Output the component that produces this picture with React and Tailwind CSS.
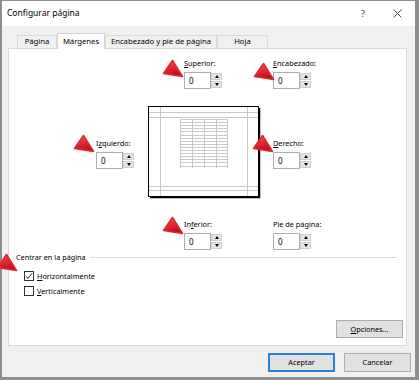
import React from 'react';

const Arrow = ({ className }) => (
    <svg className={`absolute ${className}`} width="22" height="20" viewBox="0 0 22 20">
        <defs>
            <linearGradient id="redcone" x1="0" y1="0" x2="0.3" y2="1">
                <stop offset="0" stopColor="#f65a5e" />
                <stop offset="0.55" stopColor="#e3282f" />
                <stop offset="1" stopColor="#b9121b" />
            </linearGradient>
        </defs>
        <path d="M10.5 1.5 L20.5 17.5 L1.5 14.5 Z" fill="url(#redcone)" stroke="#dc2a31" strokeWidth="1.6" strokeLinejoin="round" />
    </svg>
);

const Spin = ({ value = '0' }) => (
    <div className="flex h-[17px]">
        <div className="w-[27px] border border-[#acaeb3] bg-white pl-[4px] text-[8px] leading-[15px] text-black">{value}</div>
        <div className="flex w-[11px] flex-col gap-[1px] py-[1px]">
            <div className="flex flex-1 items-center justify-center border border-[#cfcfcf] bg-[#e5e5e5]">
                <div className="h-0 w-0 border-x-[2.5px] border-b-[3px] border-x-transparent border-b-black" />
            </div>
            <div className="flex flex-1 items-center justify-center border border-[#cfcfcf] bg-[#e5e5e5]">
                <div className="h-0 w-0 border-x-[2.5px] border-t-[3px] border-x-transparent border-t-black" />
            </div>
        </div>
    </div>
);

const Field = ({ label }) => (
    <div className="flex flex-col">
        <div className="whitespace-nowrap text-[7.3px] leading-[12px] text-black">{label}</div>
        <div className="mt-[3px]">
            <Spin />
        </div>
    </div>
);

const Preview = () => {
    const rows = [];
    for (let y = 13; y <= 62; y += 3.1) rows.push(y);
    return (
        <svg width="113" height="93" viewBox="0 0 113 93" className="shrink-0">
            <g stroke="#c9c9c9" strokeWidth="1" fill="none">
                <line x1="1" y1="6.5" x2="110" y2="6.5" />
                <line x1="1" y1="11.5" x2="110" y2="11.5" />
                <line x1="1" y1="80.5" x2="110" y2="80.5" />
                <line x1="1" y1="84.5" x2="110" y2="84.5" />
                <line x1="12.5" y1="1" x2="12.5" y2="90" />
                <line x1="99.5" y1="1" x2="99.5" y2="90" />
                {rows.map((y) => (
                    <line key={y} x1="32" y1={Math.round(y) + 0.5} x2="80" y2={Math.round(y) + 0.5} />
                ))}
                {[32.5, 44.5, 56.5, 68.5, 79.5].map((x) => (
                    <line key={x} x1={x} y1="13" x2={x} y2="62" />
                ))}
            </g>
            <rect x="0.5" y="0.5" width="110" height="90" fill="none" stroke="#000" strokeWidth="1" />
            <line x1="111.5" y1="2" x2="111.5" y2="92" stroke="#000" strokeWidth="1.5" />
            <line x1="2" y1="91.5" x2="112" y2="91.5" stroke="#000" strokeWidth="1.5" />
        </svg>
    );
};

const Check = ({ checked, children }) => (
    <div className="flex h-[12px] items-center">
        <div className="ml-[15px] flex h-[10px] w-[10px] items-center justify-center border border-[#333] bg-white">
            {checked && (
                <svg width="8" height="8" viewBox="0 0 8 8">
                    <path d="M1 4.2 L3 6.3 L7 1.3" fill="none" stroke="#222" strokeWidth="1" />
                </svg>
            )}
        </div>
        <span className="ml-[3px] text-[7.3px] leading-[12px] text-black">{children}</span>
    </div>
);

const Tab = ({ children, className = '', active }) =>
    active ? (
        <div className={`relative z-10 -mb-px flex h-[16px] items-center justify-center border border-b-0 border-[#d4d4d4] bg-white text-[7.7px] ${className}`}>
            {children}
        </div>
    ) : (
        <div className={`mt-[2px] flex h-[13px] items-center justify-center border border-b-0 border-[#dadada] bg-[#f0f0f0] text-[7.7px] ${className}`}>
            {children}
        </div>
    );

export default function App() {
    return (
        <div className="relative h-[380px] w-[419px] overflow-hidden bg-white font-['Noto_Sans',sans-serif] text-black">
            <div className="flex h-full w-full flex-col border-t border-l-2 border-r-4 border-b-[3px] border-[#8e8e8e] bg-[#f0f0f0]">
                {/* title bar */}
                <div className="flex h-[25px] items-center bg-white pl-[5px]">
                    <span className="text-[8.5px] text-black">Configurar página</span>
                    <span className="ml-auto text-[9px] text-[#333]">?</span>
                    <svg className="ml-[28px] mr-[13px]" width="9" height="9" viewBox="0 0 9 9">
                        <path d="M0.5 0.5 L8.5 8.5 M8.5 0.5 L0.5 8.5" stroke="#333" strokeWidth="0.9" />
                    </svg>
                </div>

                {/* tabs */}
                <div className="mt-[7px] flex h-[15px] pl-[15px] text-black">
                    <Tab className="w-[40px]">Página</Tab>
                    <Tab active className="w-[48px]">Márgenes</Tab>
                    <Tab className="w-[112px]">Encabezado y pie de página</Tab>
                    <Tab className="w-[51px]">Hoja</Tab>
                </div>

                {/* panel */}
                <div className="ml-[6px] flex h-[298px] w-[399px] flex-col border border-[#d9d9d9] bg-white">
                    <div className="flex pt-[8px]">
                        <div className="ml-[175px] w-[89px]">
                            <Field label={<><u>S</u>uperior:</>} />
                        </div>
                        <Field label={<><u>E</u>ncabezado:</>} />
                    </div>

                    <div className="mt-[17px] flex items-start">
                        <div className="ml-[87px] mt-[31px] w-[52px]">
                            <Field label={<>I<u>z</u>quierdo:</>} />
                        </div>
                        <Preview />
                        <div className="ml-[12px] mt-[31px]">
                            <Field label={<><u>D</u>erecho:</>} />
                        </div>
                    </div>

                    <div className="mt-[19px] flex">
                        <div className="ml-[175px] w-[89px]">
                            <Field label={<>In<u>f</u>erior:</>} />
                        </div>
                        <Field label={<>Pie de pá<u>g</u>ina:</>} />
                    </div>

                    <div className="mt-[1px] flex items-center pl-[7px] pr-[9px]">
                        <span className="text-[7.3px] leading-[12px] text-black">Centrar en la página</span>
                        <div className="ml-[4px] h-px flex-1 bg-[#dcdcdc]" />
                    </div>

                    <div className="mt-[7px] flex flex-col gap-[3px]">
                        <Check checked><u>H</u>orizontalmente</Check>
                        <Check><u>V</u>erticalmente</Check>
                    </div>

                    <div className="mt-[23px] flex justify-end pr-[3px]">
                        <div className="flex h-[18px] w-[67px] items-center justify-center border border-[#adadad] bg-[#e1e1e1] text-[7.3px]">
                            <span><u>O</u>pciones...</span>
                        </div>
                    </div>
                </div>

                {/* buttons */}
                <div className="mt-[7px] flex justify-end gap-[9px] pr-[4px]">
                    <div className="flex h-[19px] w-[67px] items-center justify-center border-2 border-[#2b7fd6] bg-[#e1e1e1] text-[7.3px]">Aceptar</div>
                    <div className="flex h-[19px] w-[67px] items-center justify-center border border-[#adadad] bg-[#e1e1e1] text-[7.3px]">Cancelar</div>
                </div>
            </div>

            <Arrow className="left-[162px] top-[59px]" />
            <Arrow className="left-[253px] top-[62px]" />
            <Arrow className="left-[73px] top-[134px]" />
            <Arrow className="left-[252px] top-[134px]" />
            <Arrow className="left-[162px] top-[216px]" />
            <Arrow className="left-[-4px] top-[253px]" />
        </div>
    );
}
